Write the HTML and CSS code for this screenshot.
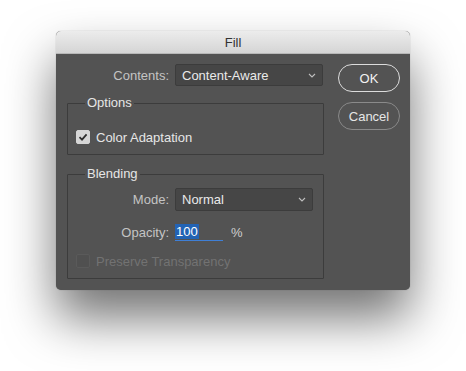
FILE: index.html
```html
<!DOCTYPE html>
<html lang="en">
<head>
    <meta charset="UTF-8">
    <title>Fill</title>
    <link rel="stylesheet" href="styles.css">
</head>
<body>
    <div class="dialog">
        <div class="title-bar">Fill</div>
        <div class="dialog-body">
            <div class="main">
                <div class="row contents-row">
                    <label class="row-label">Contents:</label>
                    <div class="select contents-select">
                        <span>Content-Aware</span>
                        <svg class="chevron" width="8" height="5" viewBox="0 0 8 5"><polyline points="1,1 4,4 7,1" fill="none" stroke="#bdbdbd" stroke-width="1.1"/></svg>
                    </div>
                </div>

                <fieldset class="group options">
                    <legend>Options</legend>
                    <div class="check-row">
                        <span class="checkbox checked">
                            <svg width="10" height="10" viewBox="0 0 10 10"><polyline points="1.5,5.2 4,7.6 8.6,2.4" fill="none" stroke="#2e2e2e" stroke-width="1.8"/></svg>
                        </span>
                        <span>Color Adaptation</span>
                    </div>
                </fieldset>

                <fieldset class="group blending">
                    <legend>Blending</legend>
                    <div class="row">
                        <label class="row-label inner">Mode:</label>
                        <div class="select mode-select">
                            <span>Normal</span>
                            <svg class="chevron" width="8" height="5" viewBox="0 0 8 5"><polyline points="1,1 4,4 7,1" fill="none" stroke="#bdbdbd" stroke-width="1.1"/></svg>
                        </div>
                    </div>
                    <div class="row opacity-row">
                        <label class="row-label inner">Opacity:</label>
                        <div class="opacity-input"><span class="selected">100</span></div>
                        <span class="percent">%</span>
                    </div>
                    <div class="check-row disabled">
                        <span class="checkbox"></span>
                        <span>Preserve Transparency</span>
                    </div>
                </fieldset>
            </div>
            <div class="buttons">
                <button class="btn btn-default">OK</button>
                <button class="btn">Cancel</button>
            </div>
        </div>
    </div>
</body>
</html>
```

FILE: styles.css
```css
html {
    background-color: #fff;
}

body {
    margin: 0;
    min-height: 371px;
    box-sizing: border-box;
    font-family: "Liberation Sans", Arial, sans-serif;
    font-size: 13px;
    padding: 31px 0 0 56px;
}

.dialog {
    width: 354px;
    height: 259px;
    background-color: #535353;
    border-radius: 5px;
    overflow: hidden;
    box-shadow: 0 28px 50px rgba(0, 0, 0, 0.55), 0 0 1px rgba(0, 0, 0, 0.4);
}

.title-bar {
    height: 23px;
    line-height: 24px;
    text-align: center;
    color: #333;
    background: linear-gradient(#ececec, #d5d5d5);
    border-bottom: 1px solid #b8b8b8;
    box-sizing: border-box;
}

.dialog-body {
    display: flex;
    padding: 10px 10px 0 11px;
}

.main {
    width: 257px;
}

.row {
    display: flex;
    align-items: center;
}

.row-label {
    width: 102px;
    margin-right: 6px;
    text-align: right;
    color: #c4c4c4;
}

.row-label.inner {
    width: 93px;
}

.select {
    display: flex;
    align-items: center;
    justify-content: space-between;
    box-sizing: border-box;
    background-color: #464646;
    border: 1px solid #3c3c3c;
    border-radius: 2px;
    color: #eaeaea;
    padding: 0 6px 0 6px;
}

.contents-select {
    width: 148px;
    height: 22px;
}

.mode-select {
    width: 138px;
    height: 23px;
}

.group {
    margin: 0;
    border: 1px solid #3c3c3c;
    border-radius: 1px;
    padding: 0 8px;
    width: 257px;
    box-sizing: border-box;
    color: #e6e6e6;
}

.group legend {
    margin-left: 9px;
    padding: 0 2px;
    line-height: 16px;
}

.options {
    margin-top: 9px;
    height: 60px;
}

.options .check-row {
    margin-top: 18px;
}

.blending {
    margin-top: 11px;
    height: 113px;
}

.blending .row:first-of-type {
    margin-top: 6px;
}

.check-row {
    display: flex;
    align-items: center;
    height: 16px;
}

.checkbox {
    width: 14px;
    height: 14px;
    box-sizing: border-box;
    border-radius: 2px;
    margin-right: 6px;
    display: flex;
    align-items: center;
    justify-content: center;
    background-color: #4d4d4d;
    border: 1px solid #5f5f5f;
}

.checkbox.checked {
    background-color: #d6d6d6;
    border-color: #d6d6d6;
}

.opacity-row {
    margin-top: 12px;
    height: 18px;
}

.opacity-input {
    width: 48px;
    height: 17px;
    border-bottom: 1px solid #3f7fd6;
    box-sizing: border-box;
}

.selected {
    display: inline-block;
    background-color: #2363b4;
    color: #fff;
    line-height: 15px;
    padding: 0 1px;
}

.percent {
    margin-left: 8px;
    color: #d0d0d0;
}

.disabled {
    margin-top: 12px;
    color: #727272;
}

.disabled .checkbox {
    background-color: #505050;
    border-color: #5a5a5a;
}

.buttons {
    display: flex;
    flex-direction: column;
    margin-left: 14px;
}

.btn {
    width: 62px;
    height: 28px;
    margin-bottom: 10px;
    border-radius: 14px;
    background-color: #535353;
    border: 1px solid #8a8a8a;
    color: #e6e6e6;
    font-family: "Liberation Sans", Arial, sans-serif;
    font-size: 13px;
    padding: 0;
}

.btn-default {
    border: 1.5px solid #dcdcdc;
    color: #f2f2f2;
}
```
